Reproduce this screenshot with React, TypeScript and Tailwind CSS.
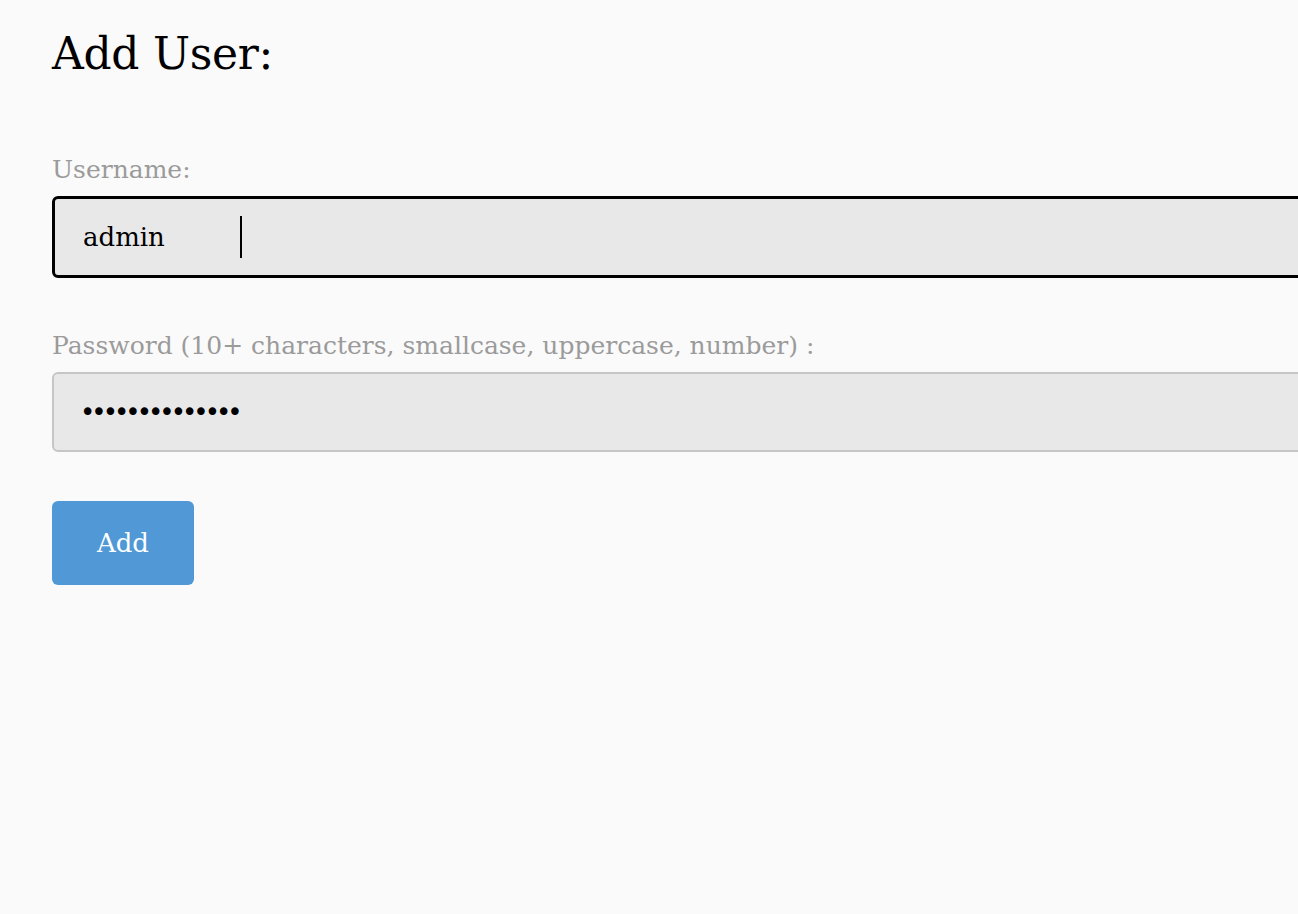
export default function App() {
  return (
    <div
      className="h-screen w-full overflow-hidden bg-[#fafafa] text-black"
      style={{ fontFamily: '"DejaVu Serif", serif' }}
    >
      <div className="pl-[52px] pt-[24px]">
        <h1 className="text-[44px] leading-[60px] tracking-[-0.3px]">Add User:</h1>

        <form className="mt-[70px] flex flex-col" onSubmit={(e) => e.preventDefault()}>
          <label className="text-[25px] leading-[32px] text-[#9b9b9b]">Username:</label>
          <div className="relative mt-[10px] flex h-[82px] w-[1400px] items-center rounded-[6px] border-[3px] border-black bg-[#e8e8e8] pl-[28px] text-[26px]">
            admin
            <span className="absolute left-[185px] top-[17px] h-[42px] w-[2px] bg-black" />
          </div>

          <label className="mt-[52px] text-[25px] leading-[32px] text-[#9b9b9b]">
            Password (10+ characters, smallcase, uppercase, number) :
          </label>
          <div
            className="mt-[10px] flex h-[80px] w-[1400px] items-center rounded-[6px] border-2 border-[#c6c6c6] bg-[#e8e8e8] pl-[26px] text-[26px] tracking-[-4px]"
            style={{ fontFamily: '"DejaVu Sans", sans-serif' }}
          >
            ••••••••••••••
          </div>

          <button
            type="submit"
            className="mt-[49px] h-[84px] w-[142px] rounded-[6px] bg-[#5098d6] text-[26px] text-white"
          >
            Add
          </button>
        </form>
      </div>
    </div>
  );
}
